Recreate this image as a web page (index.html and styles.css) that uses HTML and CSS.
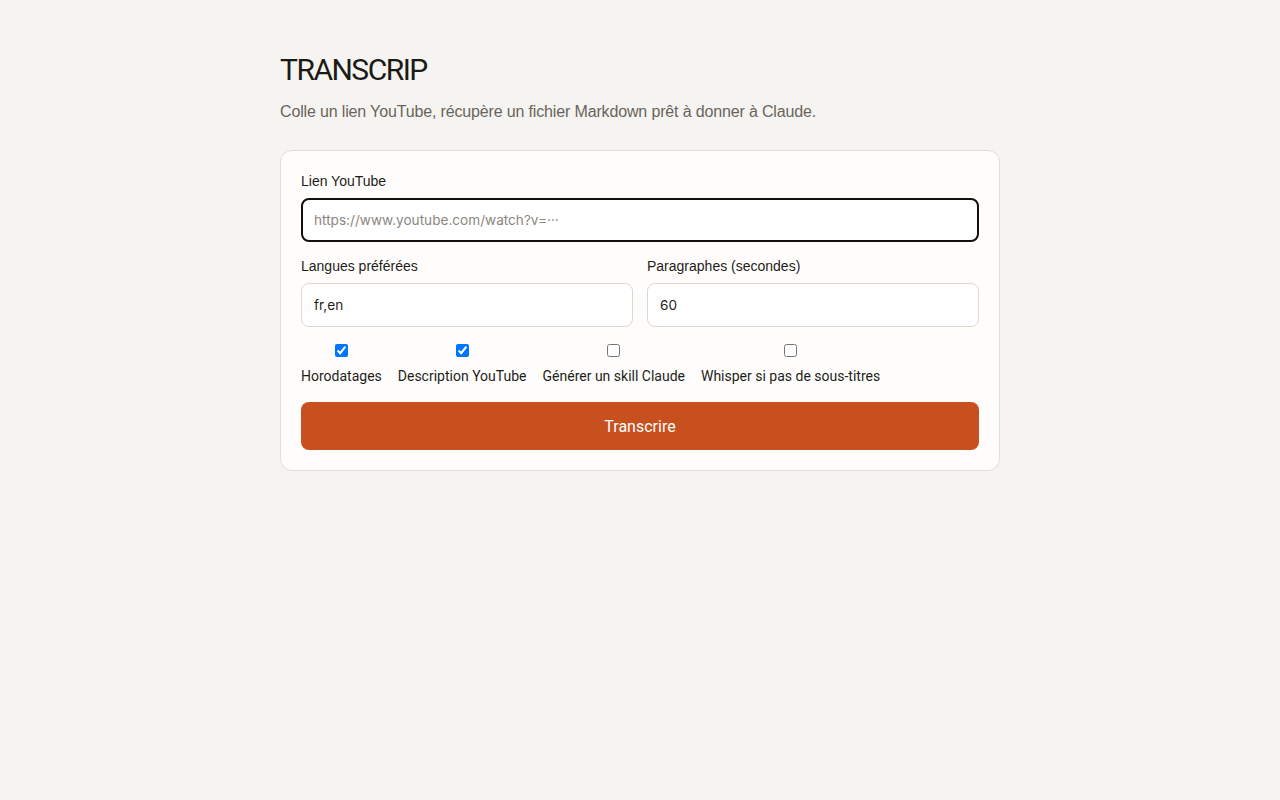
FILE: index.html
```html
<!DOCTYPE html>
<html lang="fr">
<head>
<meta charset="utf-8">
<title>Transcrip</title>
<link rel="stylesheet" href="styles.css">
</head>
<body>
<main class="page">
  <h1 class="title">TRANSCRIP</h1>
  <p class="lede">Colle un lien YouTube, récupère un fichier Markdown prêt à donner à Claude.</p>
  <form class="card">
    <label class="field">
      <span class="label">Lien YouTube</span>
      <input class="input input-focus" type="text" placeholder="https://www.youtube.com/watch?v=···">
    </label>
    <div class="row">
      <label class="field">
        <span class="label">Langues préférées</span>
        <input class="input" type="text" value="fr,en">
      </label>
      <label class="field">
        <span class="label">Paragraphes (secondes)</span>
        <input class="input" type="text" value="60">
      </label>
    </div>
    <div class="checks">
      <label class="check"><input type="checkbox" checked><span>Horodatages</span></label>
      <label class="check"><input type="checkbox" checked><span>Description YouTube</span></label>
      <label class="check"><input type="checkbox"><span>Générer un skill Claude</span></label>
      <label class="check"><input type="checkbox"><span>Whisper si pas de sous-titres</span></label>
    </div>
    <button class="btn" type="button">Transcrire</button>
  </form>
</main>
</body>
</html>
```
FILE: styles.css
```css
* { box-sizing: border-box; }
html, body { margin: 0; }
body {
  background: #f5f4f0;
  color: #1f1d1a;
  font-family: Roboto, "Liberation Sans", Arial, sans-serif;
}
.page {
  width: 720px;
  margin: 0 auto;
  padding-top: 52px;
}
.title {
  margin: 0;
  font-family: Roboto, "Liberation Sans", Arial, sans-serif;
  font-size: 30px;
  font-weight: 400;
  letter-spacing: -1.5px;
  line-height: 36px;
  color: #1c1a17;
}
.lede {
  margin: 14px 0 28px;
  font-family: "Liberation Sans", Arial, sans-serif;
  font-size: 16px;
  line-height: 20px;
  letter-spacing: -0.15px;
  color: #69655e;
}
.card {
  background: #fefdfb;
  border: 1px solid #e2ded7;
  border-radius: 12px;
  padding: 20px;
  display: flex;
  flex-direction: column;
  gap: 14px;
}
.field {
  display: flex;
  flex-direction: column;
  gap: 7px;
  min-width: 0;
}
.label {
  font-family: "Liberation Sans", Arial, sans-serif;
  font-size: 14px;
  line-height: 20px;
  color: #1f1d1a;
}
.input {
  height: 44px;
  border: 1px solid #dcd8d1;
  border-radius: 8px;
  background: #fff;
  padding: 0 12px;
  font-family: Inter, "Liberation Sans", Arial, sans-serif;
  font-size: 13.6px;
  color: #1f1d1a;
  outline: none;
  width: 100%;
}
.input::placeholder { color: #8a8680; }
.input-focus {
  border: 2px solid #111;
  padding: 0 11px;
}
.row {
  display: grid;
  grid-template-columns: 1fr 1fr;
  gap: 14px;
}
.checks {
  display: flex;
  gap: 16px;
}
.check {
  display: flex;
  flex-direction: column;
  align-items: center;
  gap: 4px;
  font-family: Roboto, "Liberation Sans", Arial, sans-serif;
  font-size: 14px;
  line-height: 24px;
  color: #1f1d1a;
}
.check input {
  margin: 3px 0;
  width: 13px;
  height: 13px;
}
.btn {
  height: 48px;
  border: 0;
  border-radius: 8px;
  background: #c8501e;
  color: #fff;
  font-family: Roboto, "Liberation Sans", Arial, sans-serif;
  font-size: 16px;
  cursor: pointer;
}
```
